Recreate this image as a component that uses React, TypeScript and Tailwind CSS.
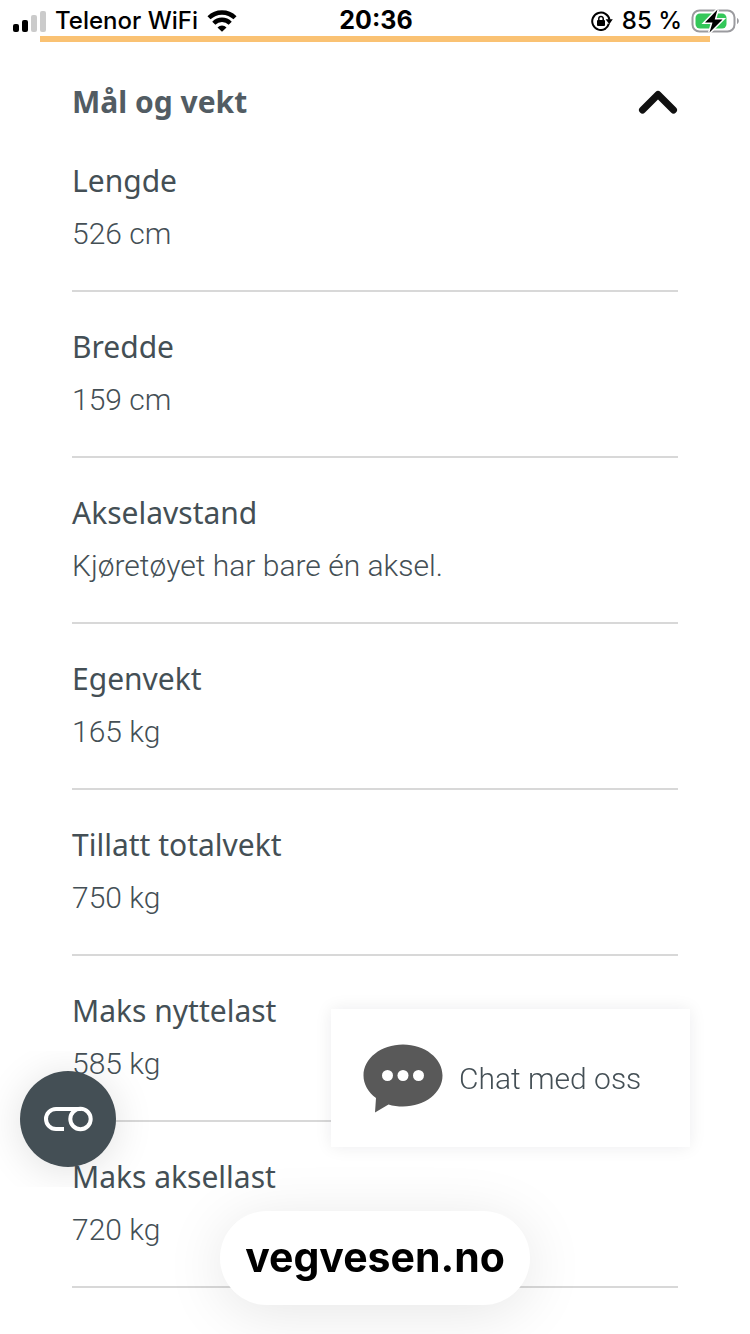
import React, { useState } from "react";

interface IMeasure {
  label: string;
  value: string;
}

const measures: IMeasure[] = [
  { label: "Lengde", value: "526 cm" },
  { label: "Bredde", value: "159 cm" },
  { label: "Akselavstand", value: "Kjøretøyet har bare én aksel." },
  { label: "Egenvekt", value: "165 kg" },
  { label: "Tillatt totalvekt", value: "750 kg" },
  { label: "Maks nyttelast", value: "585 kg" },
  { label: "Maks aksellast", value: "720 kg" },
];

function SignalIcon() {
  return (
    <svg className="h-6 w-[33px]" viewBox="0 0 33 24" aria-hidden="true">
      <rect x="0" y="15" width="6" height="8" rx="2" fill="#000" />
      <rect x="9" y="11" width="6" height="12" rx="2" fill="#000" />
      <rect x="18" y="6" width="6" height="17" rx="2" fill="#cbcbcb" />
      <rect x="27" y="2" width="6" height="21" rx="2" fill="#cbcbcb" />
    </svg>
  );
}

function WifiIcon() {
  return (
    <svg className="h-[22px] w-[30px]" viewBox="0 0 30 22" aria-hidden="true">
      <g fill="none" stroke="#000" strokeWidth="4.4">
        <path d="M2 7.800a18.600 18.600 0 0 1 26 0" />
        <path d="M6.800 13.200a11.600 11.600 0 0 1 16.400 0" />
      </g>
      <path d="M15 21.800l-4.500-4.400a6.400 6.400 0 0 1 9 0z" fill="#000" />
    </svg>
  );
}

function RotationLockIcon() {
  return (
    <svg className="h-5 w-[22px]" viewBox="0 0 22 20" aria-hidden="true">
      <path
        d="M14.500 17.700a8.700 8.700 0 1 1 4-8.900"
        fill="none"
        stroke="#000"
        strokeWidth="2"
      />
      <path d="M14.600 8.200h7.200l-3.500 5z" fill="#000" />
      <path d="M17.800 12.800a8.700 8.700 0 0 1-3.800 5.200" fill="none" stroke="#000" strokeWidth="2" />
      <rect x="6" y="9" width="8" height="6" rx="1" fill="#000" />
      <path d="M7.800 9.400V7.600a2.200 2.200 0 0 1 4.400 0v1.800" fill="none" stroke="#000" strokeWidth="1.5" />
    </svg>
  );
}

function BatteryIcon() {
  return (
    <svg className="h-6 w-12" viewBox="0 0 48 24" aria-hidden="true">
      <rect x="1.500" y="1.500" width="42" height="21" rx="7" fill="#fff" stroke="#9b9b9f" strokeWidth="2" />
      <path d="M46 9c2.400 1 2.400 5 0 6z" fill="#9b9b9f" />
      <rect x="4.500" y="4.500" width="31" height="15" rx="4.500" fill="#34c759" />
      <path
        d="M26.500.5L14 13.500h7.500L18.500 23.500l13-13h-7.800z"
        fill="#000"
        stroke="#fff"
        strokeWidth="3"
        paintOrder="stroke"
      />
    </svg>
  );
}

function StatusBar() {
  return (
    <div className="grid h-9 grid-cols-3 items-center pt-1 pr-[11px] pl-[13px] font-[Inter,sans-serif] text-2xl text-black">
      <div className="flex items-center gap-[9px]">
        <SignalIcon />
        <span className="font-medium whitespace-nowrap">Telenor WiFi</span>
        <WifiIcon />
      </div>
      <span className="text-center text-[25px] font-bold">20:36</span>
      <div className="flex items-center justify-end gap-[9px]">
        <RotationLockIcon />
        <span className="font-medium whitespace-nowrap">85 %</span>
        <BatteryIcon />
      </div>
    </div>
  );
}

export default function App() {
  const [isOpen, setIsOpen] = useState(true);

  return (
    <div className="min-h-screen bg-white font-['Noto_Sans',sans-serif] text-[#444f55]">
      <StatusBar />
      <main>
        <div className="mx-10 h-[6px] bg-[#fac273]" />
        <section className="px-[72px] pt-8">
          <h2>
            <button
              type="button"
              className="flex h-14 w-full items-center justify-between pb-[2px] text-[30px] font-bold text-[#525c63]"
              aria-expanded={isOpen}
              onClick={() => setIsOpen((s) => !s)}
            >
              Mål og vekt
              <svg
                className={isOpen ? "h-[26px] w-10" : "h-[26px] w-10 rotate-180"}
                viewBox="0 0 40 26"
                aria-hidden="true"
              >
                <path
                  d="M4.500 22L20 6.500 35.500 22"
                  fill="none"
                  stroke="#111"
                  strokeWidth="7"
                  strokeLinecap="round"
                  strokeLinejoin="round"
                />
              </svg>
            </button>
          </h2>
          {isOpen && (
            <dl>
              {measures.map((m) => (
                <div
                  key={m.label}
                  className="border-b-2 border-[#d8d8d8] pt-[25px] pb-[29px] not-first:pt-[29px]"
                >
                  <dt className="text-[30px] leading-[52px]">{m.label}</dt>
                  <dd className="font-[Roboto,sans-serif] text-[30px] leading-[54px] font-light">
                    {m.value}
                  </dd>
                </div>
              ))}
            </dl>
          )}
        </section>
      </main>

      <div className="fixed bottom-[147px] left-0 overflow-hidden p-5 pr-10">
        <button
          type="button"
          aria-label="Informasjonskapsler"
          className="flex size-24 items-center justify-center rounded-full bg-[#444f55] shadow-[0_4px_40px_rgba(0,0,0,0.12)]"
        >
          <svg className="h-[26px] w-[50px]" viewBox="0 0 50 26" aria-hidden="true">
            <g fill="none" stroke="#fff" strokeWidth="4">
              <path d="M21 23h-8a10 10 0 0 1 0-20h25" />
              <circle cx="37.500" cy="13" r="10.200" />
            </g>
          </svg>
        </button>
      </div>

      <button
        type="button"
        className="fixed right-[60px] bottom-[187px] flex h-[138px] w-[359px] items-center gap-4 bg-white px-8 font-[Roboto,sans-serif] text-[30px] font-light whitespace-nowrap shadow-[0_0_16px_rgba(0,0,40,0.08)]"
      >
        <svg className="h-[70px] w-20 shrink-0" viewBox="0 0 80 70" aria-hidden="true">
          <path
            d="M40 1.500c22 0 39.500 14 39.500 31S62 63.500 40 63.500c-5 0-10-.6-14.500-2L12 69.500l1-14.500C5 49 .5 41 .5 32.500c0-17 17.500-31 39.500-31z"
            fill="#595959"
          />
          <circle cx="24.500" cy="32.500" r="5.500" fill="#fff" />
          <circle cx="40" cy="32.500" r="5.500" fill="#fff" />
          <circle cx="55.500" cy="32.500" r="5.500" fill="#fff" />
        </svg>
        Chat med oss
      </button>

      <div className="fixed inset-x-0 bottom-[29px] flex justify-center">
        <button
          type="button"
          className="h-[94px] rounded-full bg-white px-[25px] font-[Inter,sans-serif] text-[41px] font-bold text-black shadow-[0_8px_60px_rgba(0,0,0,0.10)]"
        >
          vegvesen.no
        </button>
      </div>
    </div>
  );
}
